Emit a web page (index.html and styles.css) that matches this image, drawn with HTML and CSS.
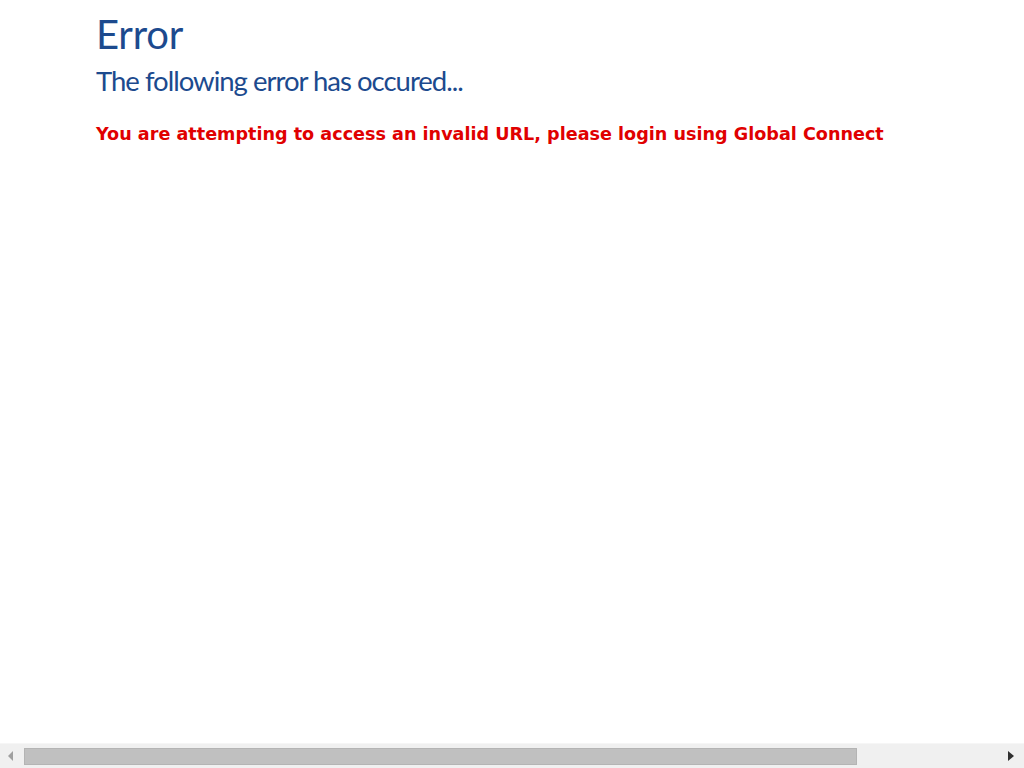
FILE: index.html
```html
<!DOCTYPE html>
<html>
<head>
<meta charset="utf-8">
<link rel="stylesheet" href="styles.css">
</head>
<body>
<div class="page">
  <h1 class="title">Error</h1>
  <h2 class="subtitle">The following error has occured...</h2>
  <p class="message">You are attempting to access an invalid URL, please login using Global Connect</p>
</div>
<div class="hscroll">
  <span class="arrow arrow-left"></span>
  <div class="track"><div class="thumb"></div></div>
  <span class="arrow arrow-right"></span>
</div>
</body>
</html>
```
FILE: styles.css
```css
html, body {
  margin: 0;
  padding: 0;
  background: #ffffff;
}
.page {
  padding: 10px 0 0 96px;
}
.title {
  margin: 0;
  font-family: Lato, sans-serif;
  font-weight: 400;
  font-size: 40px;
  line-height: 48px;
  color: #1c4a8e;
  letter-spacing: -0.2px;
}
.subtitle {
  margin: 0;
  font-family: Lato, sans-serif;
  font-weight: 400;
  font-size: 27.5px;
  line-height: 46px;
  color: #1c4a8e;
  letter-spacing: -1px;
}
.message {
  margin: 19px 0 0;
  font-family: "DejaVu Sans", sans-serif;
  font-weight: bold;
  font-size: 17.6px;
  line-height: 22px;
  color: #e00000;
}
.hscroll {
  position: fixed;
  left: 0;
  right: 0;
  bottom: 0;
  height: 24px;
  background: #f0f0f0;
  border-top: 1px solid #f6f6f6;
  display: flex;
  align-items: center;
}
.track {
  flex: 1;
  height: 100%;
  display: flex;
  align-items: center;
  padding-left: 3px;
}
.thumb {
  width: 833px;
  height: 17px;
  background: #c0c0c0;
  border: 1px solid #b4b4b4;
  box-sizing: border-box;
}
.arrow {
  width: 0;
  height: 0;
  border-top: 5px solid transparent;
  border-bottom: 5px solid transparent;
}
.arrow-left {
  margin: 0 8px 0 8px;
  border-right: 5px solid #a0a0a0;
}
.arrow-right {
  margin: 0 10px 0 8px;
  border-left: 6px solid #303030;
}
```
